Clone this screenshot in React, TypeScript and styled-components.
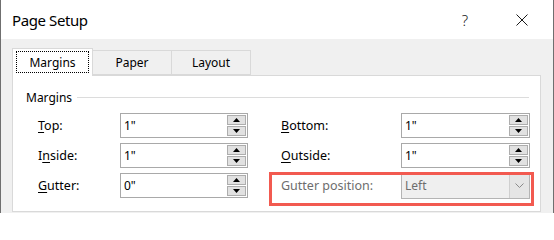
import React from "react";
import styled, { createGlobalStyle } from "styled-components";

const GlobalStyle = createGlobalStyle`
  html, body {
    margin: 0;
    padding: 0;
    background: #ffffff;
  }
  body {
    font-family: "Noto Sans", "Open Sans", sans-serif;
    font-size: 12px;
    color: #000000;
  }
`;

const Window = styled.div`
  width: 554px;
  height: 213px;
  box-sizing: border-box;
  border-left: 1px solid #6f6f6f;
  border-right: 1px solid #6f6f6f;
  display: flex;
  flex-direction: column;
  overflow: hidden;
`;

const TitleBar = styled.div`
  height: 39px;
  flex-shrink: 0;
  background: #ffffff;
  display: flex;
  align-items: center;
  padding-left: 11px;
  padding-right: 8px;
`;

const Title = styled.div`
  flex-grow: 1;
  font-size: 15px;
  color: #000000;
  letter-spacing: -0.4px;
  padding-top: 1px;
`;

const CaptionButton = styled.div<{ $gap?: number }>`
  width: 46px;
  height: 39px;
  margin-left: ${(p) => p.$gap ?? 0}px;
  display: flex;
  align-items: center;
  justify-content: center;
  color: #1a1a1a;
  font-size: 15px;
  font-weight: 300;
`;

const Body = styled.div`
  flex-grow: 1;
  background: #f0f0f0;
  padding: 9px 12px 0 11px;
  display: flex;
  flex-direction: column;
`;

const TabStrip = styled.div`
  display: flex;
  align-items: flex-end;
  height: 27px;
  position: relative;
  z-index: 1;
`;

const Tab = styled.div<{ $active?: boolean; $width: number }>`
  box-sizing: border-box;
  width: ${(p) => p.$width}px;
  height: ${(p) => (p.$active ? 28 : 25)}px;
  margin-bottom: ${(p) => (p.$active ? -1 : 0)}px;
  background: ${(p) => (p.$active ? "#ffffff" : "#f0f0f0")};
  border: 1px solid #d9d9d9;
  border-bottom: ${(p) => (p.$active ? "none" : "1px solid #d9d9d9")};
  margin-left: ${(p) => (p.$active ? 0 : -1)}px;
  display: flex;
  align-items: center;
  justify-content: center;
  padding: ${(p) => (p.$active ? "2px 3px 3px" : "0 0 1px")};
`;

const FocusLabel = styled.div`
  box-sizing: border-box;
  width: 100%;
  height: 100%;
  border: 1px dotted #000000;
  display: flex;
  align-items: center;
  justify-content: center;
`;

const Panel = styled.div`
  box-sizing: border-box;
  width: 529px;
  height: 137px;
  background: #ffffff;
  border: 1px solid #d9d9d9;
  padding: 13px 11px 0 13px;
`;

const GroupHeader = styled.div`
  display: flex;
  align-items: center;
  gap: 5px;
  height: 16px;
`;

const GroupLine = styled.div`
  flex-grow: 1;
  height: 1px;
  background: #dcdcdc;
`;

const Grid = styled.div`
  margin-top: 8px;
  margin-left: 12px;
  display: grid;
  grid-template-columns: 82px 128px 33px 120px 129px;
  grid-auto-rows: 25px;
  row-gap: 5px;
  align-items: center;
`;

const Label = styled.div<{ $disabled?: boolean }>`
  color: ${(p) => (p.$disabled ? "#6d6d6d" : "#000000")};
  white-space: nowrap;
  position: relative;
  font-size: 12.5px;
`;

const Key = styled.span`
  text-decoration: underline;
  text-underline-offset: 2px;
`;

const SpinBox = styled.div`
  box-sizing: border-box;
  height: 25px;
  border: 1px solid #a9a9a9;
  background: #ffffff;
  display: flex;
  align-items: center;
  padding: 1px 1px 1px 3px;
`;

const SpinValue = styled.div`
  flex-grow: 1;
`;

const SpinButtons = styled.div`
  display: flex;
  flex-direction: column;
  gap: 1px;
  height: 100%;
`;

const SpinButton = styled.div`
  box-sizing: border-box;
  width: 19px;
  flex: 1;
  background: #e1e1e1;
  border: 1px solid #adadad;
  display: flex;
  align-items: center;
  justify-content: center;
`;

const Select = styled.div`
  box-sizing: border-box;
  height: 26px;
  border: 1px solid #b4b4b4;
  background: #efefef;
  color: #6d6d6d;
  display: flex;
  align-items: stretch;
  padding-left: 3px;
`;

const SelectValue = styled.div`
  flex-grow: 1;
  display: flex;
  align-items: center;
`;

const SelectArrow = styled.div`
  width: 19px;
  background: #e5e5e5;
  border-left: 1px solid #cfcfcf;
  display: flex;
  align-items: center;
  justify-content: center;
`;

const Highlight = styled.div`
  position: absolute;
  left: -12px;
  top: -5px;
  width: 265px;
  height: 34px;
  box-sizing: border-box;
  border: 3px solid #f25a50;
  pointer-events: none;
`;

const Triangle = ({ up }: { up?: boolean }) => (
  <svg width="7" height="4" viewBox="0 0 7 4">
    <path d={up ? "M0 4 L3.5 0 L7 4 Z" : "M0 0 L7 0 L3.5 4 Z"} fill="#000" />
  </svg>
);

const Spin = ({ value }: { value: string }) => (
  <SpinBox>
    <SpinValue>{value}</SpinValue>
    <SpinButtons>
      <SpinButton>
        <Triangle up />
      </SpinButton>
      <SpinButton>
        <Triangle />
      </SpinButton>
    </SpinButtons>
  </SpinBox>
);

const Spacer = () => <div />;

export default function App() {
  return (
    <>
      <GlobalStyle />
      <Window>
        <TitleBar>
          <Title>Page Setup</Title>
          <CaptionButton>?</CaptionButton>
          <CaptionButton $gap={11}>
            <svg width="12" height="12" viewBox="0 0 12 12">
              <path d="M0.5 0.5 L11.5 11.5 M11.5 0.5 L0.5 11.5" stroke="#1a1a1a" strokeWidth="1" />
            </svg>
          </CaptionButton>
        </TitleBar>
        <Body>
          <TabStrip>
            <Tab $active $width={81}>
              <FocusLabel>Margins</FocusLabel>
            </Tab>
            <Tab $width={80}>Paper</Tab>
            <Tab $width={80}>Layout</Tab>
          </TabStrip>
          <Panel>
            <GroupHeader>
              <span>Margins</span>
              <GroupLine />
            </GroupHeader>
            <Grid>
              <Label>
                <Key>T</Key>op:
              </Label>
              <Spin value={'1"'} />
              <Spacer />
              <Label>
                <Key>B</Key>ottom:
              </Label>
              <Spin value={'1"'} />

              <Label>
                I<Key>n</Key>side:
              </Label>
              <Spin value={'1"'} />
              <Spacer />
              <Label>
                <Key>O</Key>utside:
              </Label>
              <Spin value={'1"'} />

              <Label>
                <Key>G</Key>utter:
              </Label>
              <Spin value={'0"'} />
              <Spacer />
              <Label $disabled>
                Gutter position:
                <Highlight />
              </Label>
              <Select>
                <SelectValue>Left</SelectValue>
                <SelectArrow>
                  <svg width="9" height="5" viewBox="0 0 9 5">
                    <path d="M0.5 0.5 L4.5 4.5 L8.5 0.5" stroke="#8a8a8a" fill="none" strokeWidth="1" />
                  </svg>
                </SelectArrow>
              </Select>
            </Grid>
          </Panel>
        </Body>
      </Window>
    </>
  );
}
